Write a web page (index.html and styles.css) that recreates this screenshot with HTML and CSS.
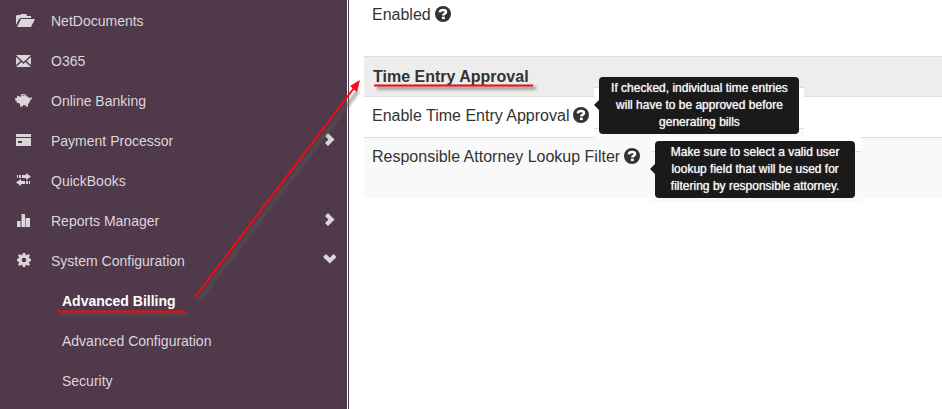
FILE: index.html
```
<!DOCTYPE html>
<html lang="en">
<head>
    <meta charset="UTF-8">
    <meta name="viewport" content="width=device-width, initial-scale=1.0">
    <title>Advanced Billing</title>
    <link rel="stylesheet" href="styles.css">
</head>
<body>
    <nav class="sidebar">
        <a href="#" class="nav-item">
            <svg class="icon" width="20" height="16" viewBox="0 0 20 16"><path d="M1 12V3l1-1h3l1-1h5l1 1v1h4v2H6L4 6z"/><path d="M6 6h14l-4 8H2z"/></svg>
            <span>NetDocuments</span>
        </a>
        <a href="#" class="nav-item">
            <svg class="icon" width="20" height="16" viewBox="0 0 20 16"><path d="M1 2h15L8.500 9z"/><path d="M1 4l4.500 4L1 12zM16 4l-4.500 4 4.500 4zM1 14l5.500-5 2 2 2-2 5.500 5z"/></svg>
            <span>O365</span>
        </a>
        <a href="#" class="nav-item">
            <svg class="icon" width="20" height="16" viewBox="0 0 20 16"><path d="M5.500 2Q8.500 0 11.500 2l-.5.900Q8.500 1.500 6 2.900z"/><path d="M2 2.500l3 1.200Q8.500 2 13 3.700l1.500 1.500 1-.7 1.500-.3-.5 2L15 7.500Q15 9.500 13 11v2.500h-2.500V12H8v1.500H5V11.500L4 10H2L1.500 8 .2 7.500V5H2z"/></svg>
            <span>Online Banking</span>
        </a>
        <a href="#" class="nav-item">
            <svg class="icon" width="20" height="16" viewBox="0 0 20 16"><path d="M1 1h15v3H1z"/><path fill-rule="evenodd" d="M1 5h15v8H1zM3 8v2h4V8z"/></svg>
            <span>Payment Processor</span>
            <svg class="chevron" width="14" height="16" viewBox="0 0 14 16"><path d="M2 3l3-3 6.500 6.500L5 13l-3-3 3.500-3.500z"/></svg>
        </a>
        <a href="#" class="nav-item">
            <svg class="icon" width="20" height="16" viewBox="0 0 20 16"><path d="M2 2h1v3H2zM4 2h2v3H4zM7 2h4V0l5 3.500L11 7V5H7z"/><path d="M14 8h1v3h-1zM11 8h2v3h-2zM10 8H6V6l-5 3.500L6 13v-2h4z"/></svg>
            <span>QuickBooks</span>
        </a>
        <a href="#" class="nav-item">
            <svg class="icon" width="20" height="16" viewBox="0 0 20 16"><path d="M2 8h3v6H2zM6.500 1H10v13H6.500zM11 5h4v9h-4z"/><path opacity=".5" d="M5 8h1.500v6H5zM10 5h1v9h-1z"/></svg>
            <span>Reports Manager</span>
            <svg class="chevron" width="14" height="16" viewBox="0 0 14 16"><path d="M2 3l3-3 6.500 6.500L5 13l-3-3 3.500-3.500z"/></svg>
        </a>
        <a href="#" class="nav-item">
            <svg class="icon" width="20" height="16" viewBox="0 0 20 16">
                <circle cx="9" cy="7" r="4" fill="none" stroke="#dcd6da" stroke-width="3.500"/>
                <path d="M7.800 0h2.400v3H7.800zM7.800 11h2.400v3H7.800zM2 5.800h3v2.400H2zM13 5.800h3v2.400h-3zM3 2.700L4.700 1l2.200 2.200-1.700 1.700zM11.100 10.800l1.700-1.700L15 11.300 13.300 13zM15 2.700L13.300 1l-2.200 2.200 1.700 1.700zM6.900 10.800L5.200 9.100 3 11.300 4.700 13z"/>
            </svg>
            <span>System Configuration</span>
            <svg class="chevron" width="14" height="16" viewBox="0 0 14 16"><path d="M0 4l3-3 3.800 3.800L10.500 1l3 3-6.700 6.500z"/></svg>
        </a>
        <a href="#" class="nav-item sub active">Advanced Billing</a>
        <a href="#" class="nav-item sub">Advanced Configuration</a>
        <a href="#" class="nav-item sub">Security</a>
    </nav>

    <main class="content">
        <div class="row row-enabled">
            <span>Enabled</span>
            <button class="help" aria-label="Help">
                <svg width="16" height="16" viewBox="0 0 16 16"><circle cx="8" cy="8" r="8"/><path class="mark" d="M4.800 6.400Q5 4 8 4 11 4 11 6 11 7.200 9.400 8 8.300 8.500 8.300 9.600"/><path class="dot" d="M6.900 10.700h2.900v2.400H6.900z"/></svg>
            </button>
        </div>
        <h2 class="section-title">Time Entry Approval</h2>
        <div class="row">
            <span>Enable Time Entry Approval</span>
            <button class="help" aria-label="Help" aria-describedby="tip-approval">
                <svg width="16" height="16" viewBox="0 0 16 16"><circle cx="8" cy="8" r="8"/><path class="mark" d="M4.800 6.400Q5 4 8 4 11 4 11 6 11 7.200 9.400 8 8.300 8.500 8.300 9.600"/><path class="dot" d="M6.900 10.700h2.900v2.400H6.900z"/></svg>
            </button>
            <div class="tip-anchor">
                <div class="tip tip-approval">
                    <div class="tooltip" role="tooltip" id="tip-approval">If checked, individual time entries<br>will have to be approved before<br>generating bills</div>
                </div>
            </div>
        </div>
        <div class="row row-filter">
            <span>Responsible Attorney Lookup Filter</span>
            <button class="help" aria-label="Help" aria-describedby="tip-filter">
                <svg width="16" height="16" viewBox="0 0 16 16"><circle cx="8" cy="8" r="8"/><path class="mark" d="M4.800 6.400Q5 4 8 4 11 4 11 6 11 7.200 9.400 8 8.300 8.500 8.300 9.600"/><path class="dot" d="M6.900 10.700h2.900v2.400H6.900z"/></svg>
            </button>
            <div class="tip-anchor">
                <div class="tip tip-filter">
                    <div class="tooltip" role="tooltip" id="tip-filter">Make sure to select a valid user<br>lookup field that will be used for<br>filtering by responsible attorney.</div>
                </div>
            </div>
        </div>
    </main>

    <!-- red pointer from the menu entry to the section -->
    <svg class="notes" width="560" height="340" viewBox="0 0 560 340">
        <defs>
            <filter id="soft" x="0" y="0" width="560" height="340" filterUnits="userSpaceOnUse">
                <feGaussianBlur stdDeviation="1.500"/>
            </filter>
        </defs>
        <g class="shadow" filter="url(#soft)">
            <path d="M60 314H188M377 88H536M199 300L358 91"/>
        </g>
        <g class="line">
            <path d="M57 311.500H185M374 85.500H533"/>
            <path d="M195 297L354 88"/>
        </g>
        <path class="head" d="M360 80l-3 12-7-6z"/>
    </svg>
</body>
</html>
```
FILE: styles.css
```
* {
    box-sizing: border-box;
}
body {
    margin: 0;
    display: flex;
    height: 100vh;
    overflow: hidden;
    font-family: "Liberation Sans", Arial, sans-serif;
    background-color: white;
    color: #333;
}

/* Left menu */
.sidebar {
    flex: none;
    width: 349px;
    padding-top: 1px;
    overflow: hidden;
    background-color: #4f394b;
    border-right: 1px solid #4f394b;
    box-shadow: inset -1px 0 0 white;
}
.nav-item {
    display: flex;
    align-items: center;
    height: 40px;
    padding: 0 11px 0 15px;
    font-size: 14px;
    line-height: 20px;
    color: #dcd6da;
    text-decoration: none;
}
.icon {
    margin-right: 16px;
    fill: #dcd6da;
}
.chevron {
    margin-left: auto;
    fill: #dcd6da;
}
.sub {
    padding-left: 62px;
}
.active {
    font-weight: bold;
    color: white;
}

/* Settings */
.content {
    flex: 1;
    min-width: 0;
    padding-left: 15px;
}
.row {
    display: flex;
    align-items: center;
    gap: 4px;
    padding: 8px 8px 10px;
    font-size: 16px;
    line-height: 22px;
    white-space: nowrap;
}
.row-enabled {
    padding: 4px 8px 30px;
}
.row-filter {
    padding-bottom: 30px;
    border-top: 1px solid #ddd;
    background-color: #f9f9f9;
}
.section-title {
    margin: 0;
    padding: 9px;
    font-size: 16px;
    line-height: 21px;
    background-color: #ededed;
    border-top: 1px solid #ddd;
    border-bottom: 1px solid #ddd;
}
.help {
    width: 16px;
    height: 16px;
    margin: 0 0 2px;
    padding: 0;
    border: none;
    background: none;
    cursor: pointer;
}
.help svg {
    display: block;
    fill: #333;
}
.help .mark {
    fill: none;
    stroke: white;
    stroke-width: 2.5;
}
.help .dot {
    fill: white;
}

/* Tooltips */
.tip-anchor {
    position: relative;
    width: 0;
    height: 22px;
}
.tip {
    position: absolute;
    left: 1px;
    width: 210px;
}
.tip-approval {
    top: -18px;
    height: 51px;
    background: linear-gradient(#ddd 1px, white 1px, white 41px, #ddd 41px, #ddd 42px, #f9f9f9 42px);
}
.tip-filter {
    top: -9px;
    left: 7px;
    height: 65px;
    background: linear-gradient(white 14px, #ddd 14px, #ddd 15px, #f9f9f9 15px);
}
.tooltip {
    position: absolute;
    top: 4px;
    left: 4px;
    width: 200px;
    padding: 3px 0;
    border-radius: 4px;
    font-size: 12px;
    line-height: 17px;
    text-align: center;
    text-shadow: 0 0 1px #eee;
    color: #f4f4f4;
    background-color: #1a1a1a;
}
.tip-approval .tooltip {
    top: -10px;
    left: 5px;
}
.tooltip::before {
    content: "";
    position: absolute;
    top: 23px;
    left: -5px;
    border: 5px solid transparent;
    border-left: none;
    border-right-color: #1a1a1a;
}

/* Pointer and underlines over the page */
.notes {
    position: absolute;
    top: 0;
    left: 0;
    pointer-events: none;
}
.line {
    fill: none;
    stroke: #f80810;
    stroke-width: 2;
}
.shadow {
    fill: none;
    stroke: #5a5a58;
    stroke-width: 4;
    opacity: 0.5;
}
.head {
    fill: #f80810;
}
```
